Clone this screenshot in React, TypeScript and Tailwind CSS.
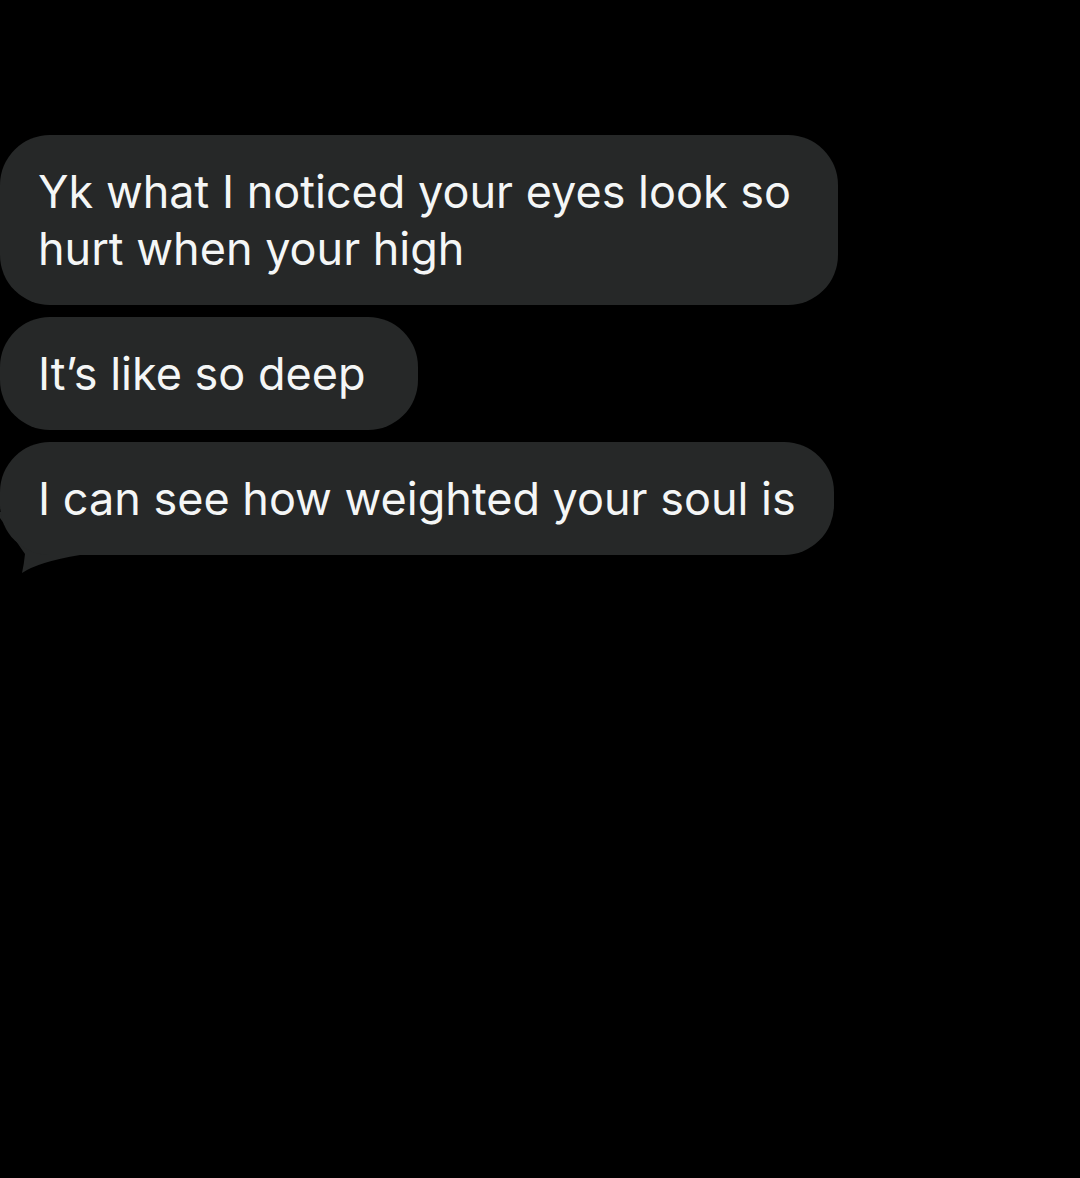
import React from 'react';

const messages = [
  { text: 'Yk what I noticed your eyes look so hurt when your high', width: 'w-[838px]', pr: 'pr-[46px]' },
  { text: 'It’s like so deep', width: 'w-fit', pr: 'pr-[52px]' },
  { text: 'I can see how weighted your soul is', width: 'w-fit', pr: 'pr-[38px]', tail: true },
];

function Bubble({ text, width, pr, tail }: { text: string; width: string; pr: string; tail?: boolean }) {
  return (
    <div className={`relative ${width}`}>
      {tail && (
        <svg className="absolute left-0 top-[70px]" width="80" height="64" viewBox="0 0 80 64">
          <path d="M0 0 L0 6 L25 42 Q24 52 22 61 Q38 50 80 43 L80 0 Z" fill="#262828" />
        </svg>
      )}
      <div className={`relative rounded-[50px] bg-[#262828] pl-[38px] ${pr} py-[28px] text-[45px] leading-[57px] text-[#f4f6f6]`}>
        {text}
      </div>
    </div>
  );
}

export default function App() {
  return (
    <div className="min-h-[1178px] w-[1080px] bg-black pt-[135px] font-['Inter',sans-serif]">
      <div className="flex flex-col gap-[12px]">
        {messages.map((m) => (
          <Bubble key={m.text} text={m.text} width={m.width} pr={m.pr} tail={m.tail} />
        ))}
      </div>
    </div>
  );
}
